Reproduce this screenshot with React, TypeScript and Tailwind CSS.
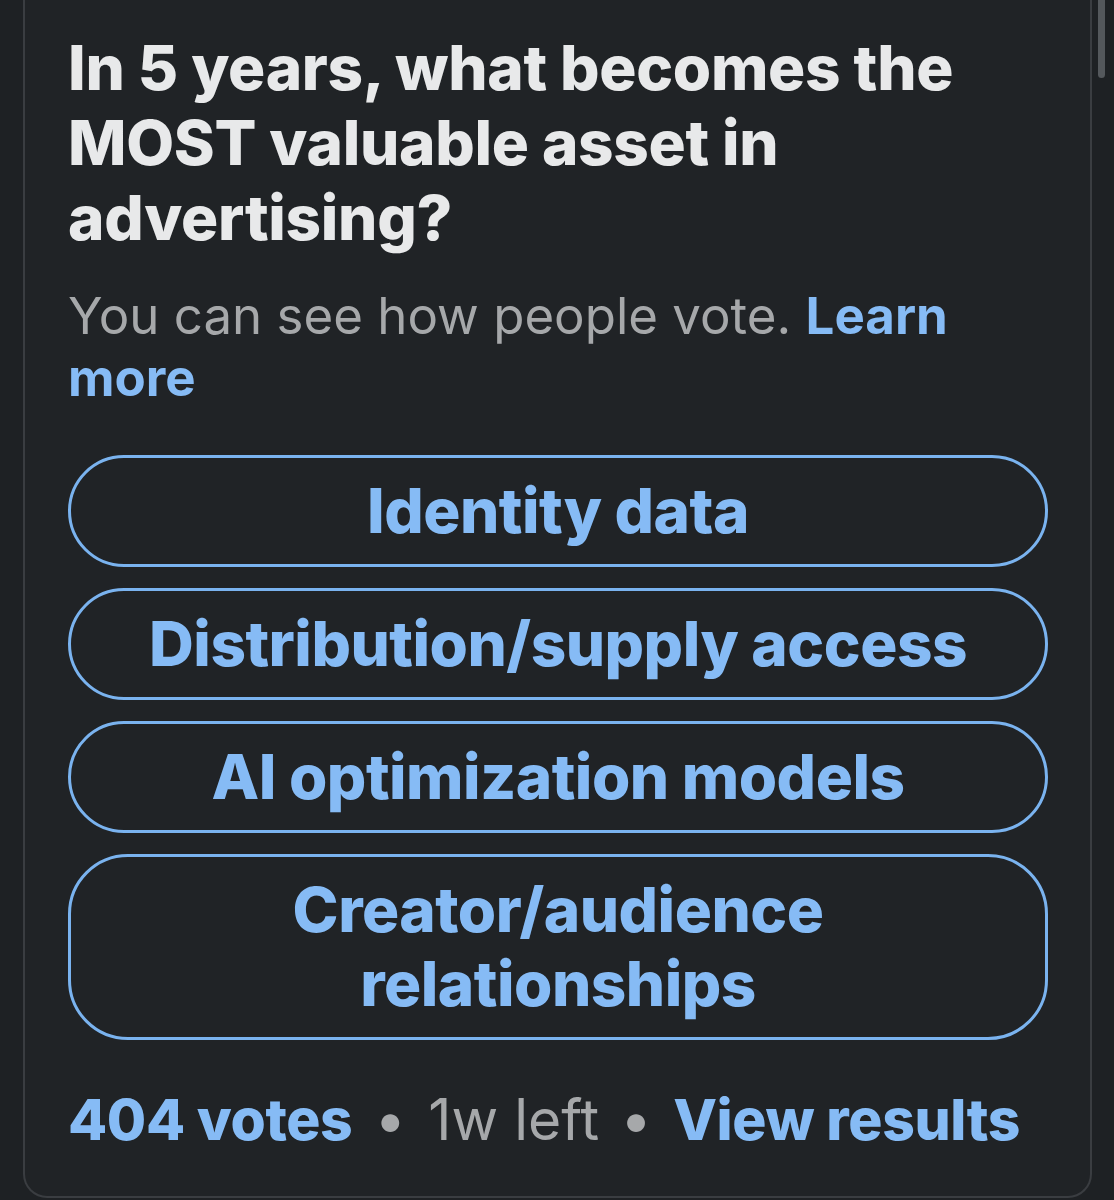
import React from 'react';

const options = [
  'Identity data',
  'Distribution/supply access',
  'AI optimization models',
  'Creator/audience relationships',
];

export default function App() {
  return (
    <div
      className="relative h-[1200px] overflow-hidden bg-[#1e2124] pl-[23px] pr-[22px]"
      style={{ fontFamily: 'Inter, "Noto Sans", sans-serif' }}
    >
      {/* scrollbar thumb */}
      <div className="absolute right-[9px] top-[-10px] h-[88px] w-[7px] rounded-full bg-[#54585c]" />

      <div className="mt-[-40px] h-[1238px] rounded-b-[24px] border-2 border-t-0 border-[#3a3d41] bg-[#202326] px-[43px] pt-[70px]">
        <h1 className="text-[62px] font-extrabold leading-[75px] tracking-[-0.3px] text-[#e8e9ea]">
          In 5 years, what becomes the MOST valuable asset in advertising?
        </h1>

        <p className="mt-[30px] text-[51px] leading-[62px] text-[#a6a8aa]">
          You can see how people vote.{' '}
          <span className="font-bold text-[#86bbf5]">Learn more</span>
        </p>

        <div className="mt-[46px] flex flex-col gap-[21px]">
          {options.map((opt) => (
            <div
              key={opt}
              className="mx-auto flex w-[980px] items-center justify-center rounded-[60px] border-[3px] border-[#7ab3ef] px-[60px] py-[16px] text-center text-[62px] font-extrabold leading-[74px] tracking-[-0.5px] text-[#86bbf5]"
            >
              {opt === 'Creator/audience relationships' ? (
                <span>
                  Creator/audience
                  <br />
                  relationships
                </span>
              ) : (
                opt
              )}
            </div>
          ))}
        </div>

        <div className="mt-[47px] flex items-center text-[57px] leading-[66px]">
          <span className="font-extrabold tracking-[-0.4px] text-[#86bbf5]">404 votes</span>
          <span className="mx-[22px] text-[#a6a8aa]">•</span>
          <span className="text-[#a6a8aa]">1w left</span>
          <span className="mx-[21px] text-[#a6a8aa]">•</span>
          <span className="font-extrabold tracking-[-0.4px] text-[#86bbf5]">View results</span>
        </div>
      </div>
    </div>
  );
}
